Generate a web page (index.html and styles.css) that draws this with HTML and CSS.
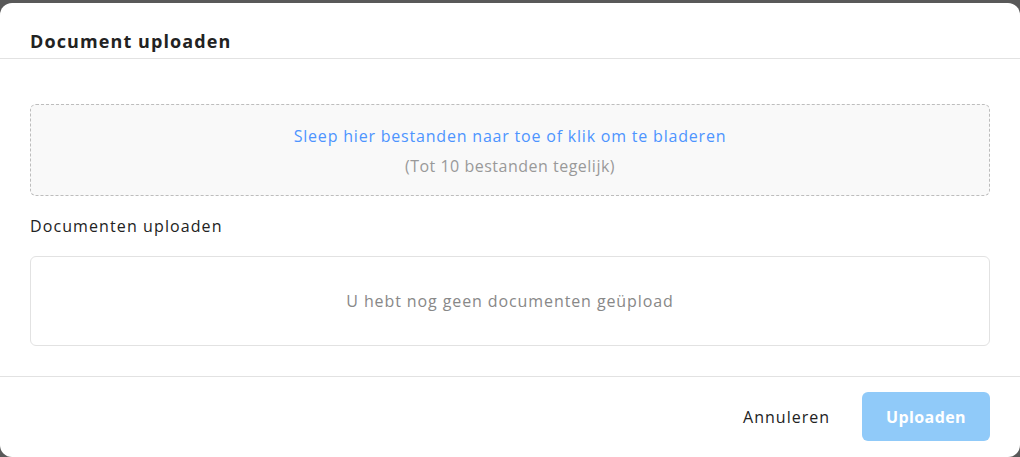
FILE: index.html
```html
<!DOCTYPE html>
<html lang="nl">
<head>
<meta charset="utf-8">
<title>Document uploaden</title>
<link rel="stylesheet" href="styles.css">
</head>
<body>
<div class="modal">
  <div class="modal-header">
    <h2 class="modal-title">Document uploaden</h2>
  </div>
  <div class="modal-body">
    <div class="dropzone">
      <div class="dropzone-main">Sleep hier bestanden naar toe of klik om te bladeren</div>
      <div class="dropzone-sub">(Tot 10 bestanden tegelijk)</div>
    </div>
    <div class="section-label">Documenten uploaden</div>
    <div class="empty-box">U hebt nog geen documenten geüpload</div>
  </div>
  <div class="modal-footer">
    <button class="btn btn-cancel">Annuleren</button>
    <button class="btn btn-primary" disabled>Uploaden</button>
  </div>
</div>
</body>
</html>
```
FILE: styles.css
```css
html, body {
  margin: 0;
  padding: 0;
  height: 100%;
  overflow: hidden;
}
body {
  background: #595959;
  font-family: "Open Sans", "Liberation Sans", sans-serif;
  color: #222;
}
.modal {
  margin-top: 3px;
  background: #fff;
  border-radius: 12px;
  height: 454px;
  display: flex;
  flex-direction: column;
}
.modal-header {
  padding: 28px 30px 7px;
  border-bottom: 1px solid #e2e2e2;
}
.modal-title {
  margin: 0;
  font-size: 18px;
  line-height: 20px;
  font-weight: 700;
  letter-spacing: 1.1px;
  color: #222;
}
.modal-body {
  padding: 45px 30px 30px;
  display: flex;
  flex-direction: column;
}
.dropzone {
  border: 1px dashed #bdbdbd;
  border-radius: 6px;
  background: #f9f9f9;
  padding: 20px 16px 18px;
  display: flex;
  flex-direction: column;
  align-items: center;
  gap: 8px;
  font-size: 16px;
  line-height: 22px;
}
.dropzone-main {
  color: #4d94ff;
  letter-spacing: 0.8px;
}
.dropzone-sub {
  color: #999;
  letter-spacing: 0.5px;
}
.section-label {
  margin-top: 19px;
  font-size: 16px;
  line-height: 22px;
  font-weight: 500;
  letter-spacing: 1.1px;
  color: #222;
}
.empty-box {
  margin-top: 19px;
  height: 88px;
  border: 1px solid #e2e2e2;
  border-radius: 6px;
  display: flex;
  align-items: center;
  justify-content: center;
  font-size: 16px;
  letter-spacing: 0.9px;
  color: #888;
}
.modal-footer {
  border-top: 1px solid #e2e2e2;
  padding: 15px 30px 0;
  display: flex;
  justify-content: flex-end;
  align-items: center;
  gap: 16px;
}
.btn {
  font-family: inherit;
  font-size: 16px;
  height: 49px;
  border: none;
  border-radius: 6px;
  cursor: pointer;
}
.btn-cancel {
  background: transparent;
  color: #222;
  padding: 0 16px;
  font-weight: 500;
  letter-spacing: 1px;
}
.btn-primary {
  width: 128px;
  background: #90caf9;
  color: #fff;
  font-weight: 700;
  letter-spacing: 0.4px;
}
```
